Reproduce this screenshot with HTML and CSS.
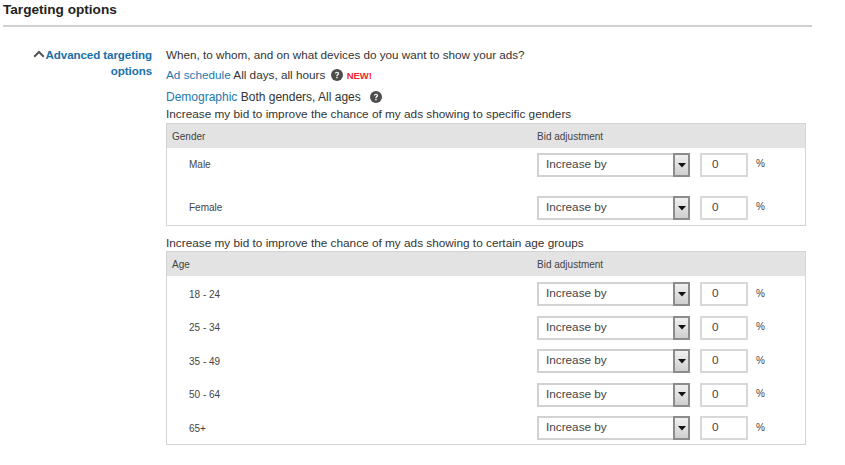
FILE: index.html
```html
<!DOCTYPE html>
<html lang="en">
<head>
<meta charset="utf-8">
<title>Targeting options</title>
<link rel="stylesheet" href="styles.css">
</head>
<body>
<svg width="0" height="0" class="defs" aria-hidden="true">
  <symbol id="help" viewBox="0 0 12 12">
    <circle cx="6" cy="6" r="6" fill="#4d4d4d"/>
    <path d="M3.9 4.6C3.9 3.4 4.8 2.7 6 2.7s2.1.7 2.1 1.8c0 1.5-1.6 1.5-1.6 2.7H5.3c0-1.7 1.5-1.8 1.5-2.6 0-.5-.3-.8-.8-.8s-.9.3-.9.8z" fill="#fff"/>
    <rect x="5.3" y="7.9" width="1.3" height="1.4" fill="#fff"/>
  </symbol>
  <symbol id="arrow" viewBox="0 0 8 5">
    <path d="M0 0h8L4 4.5z" fill="#111"/>
  </symbol>
</svg>

<h2 class="title">Targeting options</h2>

<div class="section">
  <div class="side">
    <svg class="chevron" width="12" height="8" viewBox="0 0 12 8" aria-hidden="true"><path d="M1.2 6.8 6 2l4.8 4.8" fill="none" stroke="#555" stroke-width="2"/></svg>
    <a class="side-link">Advanced targeting<br>options</a>
  </div>
  <div class="main">
    <p class="line-question">When, to whom, and on what devices do you want to show your ads?</p>
    <p class="line-schedule"><a class="link">Ad schedule</a> All days, all hours <svg class="help help-a"><use href="#help"/></svg><span class="new">NEW!</span></p>
    <p class="line-demo"><a class="link">Demographic</a> Both genders, All ages <svg class="help help-b"><use href="#help"/></svg></p>
    <p class="line-caption">Increase my bid to improve the chance of my ads showing to specific genders</p>

    <div class="panel panel-gender">
      <div class="panel-head"><span class="col-name">Gender</span><span>Bid adjustment</span></div>
      <div class="row row-tall"><span class="col-name row-name">Male</span><div class="select"><span class="select-text">Increase by</span><span class="select-btn"><svg width="8" height="5"><use href="#arrow"/></svg></span></div><div class="num">0</div><span class="pct">%</span></div>
      <div class="row row-tall row-last"><span class="col-name row-name">Female</span><div class="select"><span class="select-text">Increase by</span><span class="select-btn"><svg width="8" height="5"><use href="#arrow"/></svg></span></div><div class="num">0</div><span class="pct">%</span></div>
    </div>

    <p class="line-caption caption-age">Increase my bid to improve the chance of my ads showing to certain age groups</p>

    <div class="panel panel-age">
      <div class="panel-head"><span class="col-name">Age</span><span>Bid adjustment</span></div>
      <div class="row"><span class="col-name row-name">18 - 24</span><div class="select"><span class="select-text">Increase by</span><span class="select-btn"><svg width="8" height="5"><use href="#arrow"/></svg></span></div><div class="num">0</div><span class="pct">%</span></div>
      <div class="row"><span class="col-name row-name">25 - 34</span><div class="select"><span class="select-text">Increase by</span><span class="select-btn"><svg width="8" height="5"><use href="#arrow"/></svg></span></div><div class="num">0</div><span class="pct">%</span></div>
      <div class="row"><span class="col-name row-name">35 - 49</span><div class="select"><span class="select-text">Increase by</span><span class="select-btn"><svg width="8" height="5"><use href="#arrow"/></svg></span></div><div class="num">0</div><span class="pct">%</span></div>
      <div class="row"><span class="col-name row-name">50 - 64</span><div class="select"><span class="select-text">Increase by</span><span class="select-btn"><svg width="8" height="5"><use href="#arrow"/></svg></span></div><div class="num">0</div><span class="pct">%</span></div>
      <div class="row"><span class="col-name row-name">65+</span><div class="select"><span class="select-text">Increase by</span><span class="select-btn"><svg width="8" height="5"><use href="#arrow"/></svg></span></div><div class="num">0</div><span class="pct">%</span></div>
    </div>
  </div>
</div>
</body>
</html>
```
FILE: styles.css
```css
* { box-sizing: border-box; }
html, body { margin: 0; padding: 0; background: #fff; }
body {
  width: 845px;
  height: 465px;
  overflow: hidden;
  font-family: "Liberation Sans", Arial, sans-serif;
  font-size: 11.8px;
  color: #333;
}
.defs { position: absolute; }
.title {
  margin: 0 0 0 3px;
  width: 809px;
  height: 27px;
  padding-top: 2px;
  font-size: 13.6px;
  line-height: 16px;
  font-weight: bold;
  color: #222;
  border-bottom: 2px solid #d0d0d0;
}
.section { display: flex; padding-top: 20px; }
.side {
  width: 152px;
  flex: none;
  display: flex;
  justify-content: flex-end;
  align-items: flex-start;
  text-align: right;
  line-height: 16px;
}
.chevron { flex: none; margin: 3px 1px 0 0; }
.side-link { flex: none; white-space: nowrap; font-weight: bold; color: #1a70a8; font-size: 11.6px; letter-spacing: -0.1px; }
.main { margin-left: 14px; width: 640px; }
.main p { margin: 0; line-height: 16px; }
.line-question { font-size: 11.7px; }
.link { color: #2479ae; }
.line-schedule { margin-top: 4px !important; display: flex; align-items: center; white-space: pre; font-size: 11.75px; }
.line-demo { margin-top: 6px !important; display: flex; align-items: center; white-space: pre; font-size: 12px; }
.line-caption { margin-top: 1px !important; }
.caption-age { margin-top: 9px !important; }
.help { width: 12px; height: 12px; flex: none; }
.help-a { margin-left: 2px; }
.help-b { margin-left: 6px; }
.new { margin-left: 4px; font-size: 9.5px; font-weight: bold; color: #f0282d; position: relative; top: 1px; }
.panel { border: 1px solid #d4d4d4; margin-top: 1px; }
.panel-age { margin-top: 0; height: 194px; }
.panel-head {
  display: flex;
  align-items: center;
  height: 24px;
  background: #e3e3e3;
  font-size: 10px;
  color: #444;
}
.col-name { width: 370px; flex: none; padding-left: 5px; }
.row { display: flex; align-items: center; height: 33.5px; font-size: 10px; color: #444; }
.panel-age .panel-head { margin-bottom: 1.25px; }
.row-tall { height: 43px; align-items: flex-start; padding-top: 5px; }
.row-last { height: 34px; }
.row-tall .row-name, .row-tall .pct { line-height: 24px; }
.row-name { padding-left: 22px; }
.select {
  width: 153px;
  height: 24px;
  flex: none;
  display: flex;
  border: 2px solid #d2d2d2;
  border-right: 0;
  background: #fff;
}
.select-text { flex: 1; padding-left: 7px; font-size: 11.75px; line-height: 18px; color: #444; }
.select-btn {
  width: 17px;
  height: 24px;
  margin-top: -2px;
  display: flex;
  align-items: center;
  justify-content: center;
  border: 2px solid #8c8c8c;
  background: linear-gradient(#f0f0f0, #cfcfcf);
}
.select-btn svg { display: block; }
.num {
  width: 48px;
  height: 24px;
  margin-left: 10px;
  flex: none;
  border: 2px solid #d8d8d8;
  font-size: 11.75px;
  line-height: 18px;
  padding-left: 10px;
  color: #444;
}
.pct { margin-left: 8px; font-size: 10px; position: relative; top: -1px; }
```
